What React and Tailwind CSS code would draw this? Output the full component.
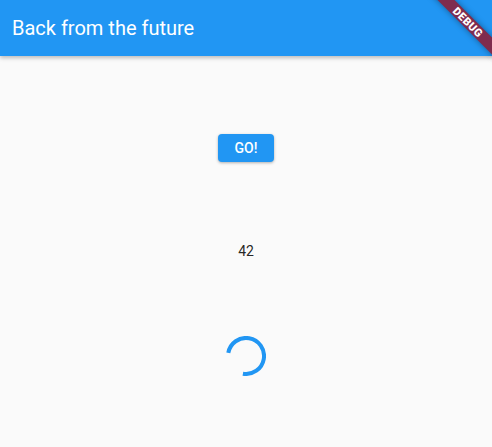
export default function App() {
  return (
    <div className="relative flex h-[447px] w-[492px] flex-col overflow-hidden bg-[#fafafa] font-['Roboto',sans-serif]">
      {/* App bar */}
      <header className="z-10 flex h-14 shrink-0 items-center bg-[#2196f3] px-3 shadow-[0_2px_4px_rgba(0,0,0,0.25)]">
        <h1 className="text-[20px] font-normal text-white">Back from the future</h1>
      </header>

      {/* Body */}
      <main className="flex flex-1 flex-col items-center pt-[78px]">
        <button className="h-7 w-14 rounded-[4px] bg-[#2196f3] text-sm font-medium uppercase text-white shadow-[0_1px_3px_rgba(0,0,0,0.3)]">
          GO!
        </button>
        <p className="mt-[79px] text-sm leading-5 text-black/[.87]">42</p>
        <svg className="mt-[75px]" width="40" height="40" viewBox="0 0 40 40" fill="none">
          <path
            d="M2.3 16.9 A18 18 0 1 1 16.9 37.7"
            stroke="#2196f3"
            strokeWidth="4"
            strokeLinecap="butt"
          />
        </svg>
      </main>

      {/* Debug banner */}
      <div className="absolute right-[-36px] top-[16px] z-20 flex h-3 w-[120px] rotate-45 items-center justify-center bg-[#7f2c4e] shadow-[0_0_6px_rgba(0,0,0,0.4)]">
        <span className="text-[11px] font-black leading-none tracking-[0.4px] text-white">DEBUG</span>
      </div>
    </div>
  )
}
